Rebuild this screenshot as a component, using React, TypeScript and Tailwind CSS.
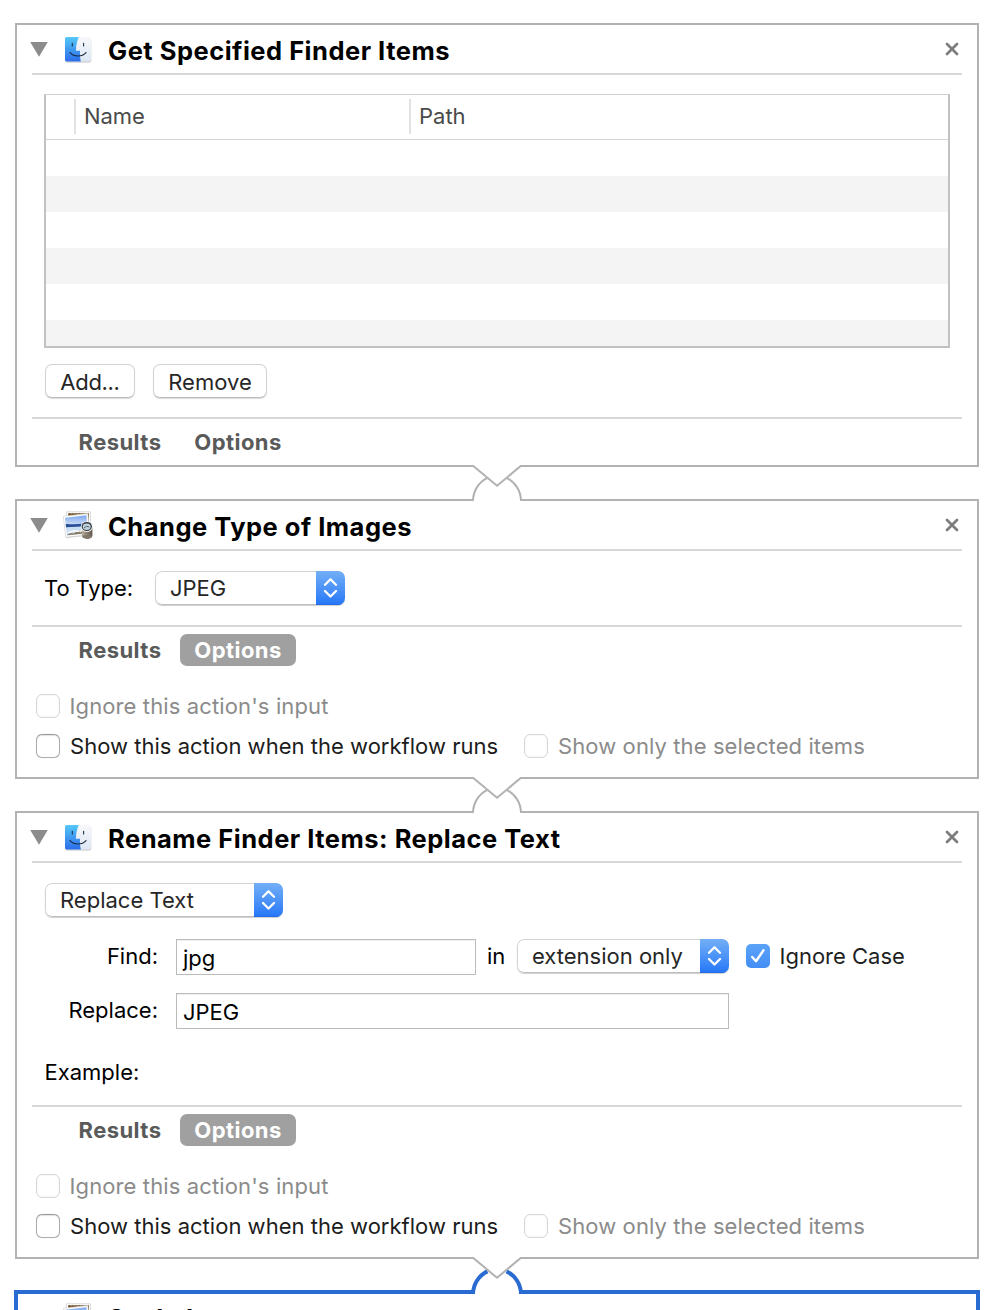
import type { ReactNode } from "react";

function FinderIcon() {
  return (
    <svg width="32" height="32" viewBox="0 0 32 32" className="block">
      <defs>
        <linearGradient id="finderBlue" x1="0" y1="0" x2="0" y2="1">
          <stop offset="0" stopColor="#55c8f8" />
          <stop offset="1" stopColor="#2c6cea" />
        </linearGradient>
        <linearGradient id="finderWhite" x1="0" y1="0" x2="0" y2="1">
          <stop offset="0" stopColor="#f8f8fa" />
          <stop offset="1" stopColor="#dce7f4" />
        </linearGradient>
      </defs>
      <rect x="2.8" y="4" width="26.6" height="25" rx="2" fill="#000" opacity="0.07" />
      <rect x="3" y="4.4" width="26.2" height="24" rx="1.8" fill="#000" opacity="0.12" />
      <rect x="3" y="3" width="26" height="24.6" rx="1.8" fill="url(#finderWhite)" />
      <path d="M4.8 3H16.8C15 7 14.1 11 13.9 16.8H18C17.9 20.5 18 24 18.8 27.6H4.8A1.8 1.8 0 0 1 3 25.8V4.8A1.8 1.8 0 0 1 4.8 3Z" fill="url(#finderBlue)" />
      <path d="M10.3 9.3v2.6M21.6 9.3v2.6" stroke="#173048" strokeWidth="1.1" strokeLinecap="round" />
      <path d="M8 18.6c4.2 4.5 12 4.5 16 0" fill="none" stroke="#14273c" strokeWidth="1.2" strokeLinecap="round" />
    </svg>
  );
}

function PreviewIcon() {
  return (
    <svg width="32" height="32" viewBox="0 0 32 32" className="block">
      <defs>
        <linearGradient id="sky" x1="0" y1="0" x2="0" y2="1">
          <stop offset="0" stopColor="#7fa9ee" />
          <stop offset="1" stopColor="#d5e4fa" />
        </linearGradient>
        <linearGradient id="loupe" x1="0" y1="0" x2="1" y2="0">
          <stop offset="0" stopColor="#b9b0a2" />
          <stop offset="0.5" stopColor="#8b8070" />
          <stop offset="1" stopColor="#5e574c" />
        </linearGradient>
      </defs>
      <path d="M4.4 1.8h24v22h-24z" fill="#fff" stroke="#c9c9c9" strokeWidth="0.7" />
      <path d="M6 3.2h21v18H6z" fill="#86683f" />
      <path d="M7 4.2h19M8 5.5h19" stroke="#4c3923" strokeWidth="0.9" strokeDasharray="1.4 1.8" />
      <path d="M1.6 7.2L26 4.4l2.2 20.8L4 28.2z" fill="#000" opacity="0.18" />
      <path d="M1.3 6.3L25.8 3.6l2.2 20.8L3.8 27.3z" fill="#fff" stroke="#cfcfcf" strokeWidth="0.6" />
      <path d="M3 7.8L24.4 5.3l1 9L3.9 16z" fill="url(#sky)" />
      <path d="M3.7 14.1c5 .4 12-.1 21.6-.9l.4 4-21.5 1.1z" fill="#294f96" />
      <path d="M4.1 17.3c7-.1 14-.7 21.5-1.2l.8 7-21.3 2.5z" fill="#c9def3" />
      <path d="M5 25.3c2-2.1 4.2-2.3 6.4-1.7 3-2.1 6.5-2.6 10-1.4l1 1.2z" fill="#85775d" />
      <path d="M6 22.7l6-2.1 5 .9" fill="none" stroke="#fff" strokeWidth="1.3" />
      <path d="M19.8 19.5v6c0 4.6 10.6 4.6 10.6 0v-8z" fill="url(#loupe)" />
      <ellipse cx="25" cy="26.4" rx="4.6" ry="1.5" fill="#81786a" />
      <ellipse cx="24.8" cy="16.6" rx="6" ry="5.4" fill="#eeeeed" />
      <ellipse cx="24.8" cy="16.5" rx="5.1" ry="4.5" fill="#31383e" />
      <ellipse cx="24.7" cy="16.8" rx="3.9" ry="3.3" fill="#c3d3de" />
      <path d="M22 18l2.6-1.8 2.6.8" fill="none" stroke="#53646e" strokeWidth="1" />
      <path d="M20.2 19.5l-2.4 2.4" stroke="#eee" strokeWidth="1.4" />
    </svg>
  );
}

function Header({ title, icon }: { title: string; icon: ReactNode }) {
  return (
    <>
      <div className="flex h-12 items-center pl-[13px] pr-[18px]">
        <svg width="18" height="15" viewBox="0 0 18 15" className="mt-px block shrink-0">
          <path d="M0.2 0H17.8L9 14.8Z" fill="#8c8c8c" />
        </svg>
        <div className="mt-[2px] ml-[14px]">{icon}</div>
        <h2 className="ml-[14px] mt-[3px] flex-1 whitespace-nowrap text-[25.5px] leading-8 font-bold tracking-[0.5px] text-black">{title}</h2>
        <svg width="14" height="14" viewBox="0 0 14 14" className="-mt-px block">
          <path d="M2 2L12 12M12 2L2 12" stroke="#7d7d7d" strokeWidth="2.7" strokeLinecap="round" />
        </svg>
      </div>
      <Divider />
    </>
  );
}

function Divider() {
  return <div className="mx-[15px] h-[2px] bg-[#d8d8d8]" />;
}

function Tabs({ active = false }: { active?: boolean }) {
  return (
    <div className="mt-[7px] flex h-8 gap-[2px] pl-[45px] text-[22px] leading-8 font-bold tracking-[0.45px] text-[#5a5a5a]">
      <div className="w-[116px] text-center">Results</div>
      <div className={active ? "w-[116px] rounded-[7px] bg-[#a0a0a0] text-center text-white" : "w-[116px] text-center"}>Options</div>
    </div>
  );
}

function Box({ disabled = false }: { disabled?: boolean }) {
  return (
    <span
      className={
        disabled
          ? "block size-6 shrink-0 rounded-[6px] border border-[#d8d8d8] bg-white shadow-[inset_0_0_2px_#e8e8e8]"
          : "block size-6 shrink-0 rounded-[6px] border border-[#adadad] border-t-[#999] bg-white shadow-[inset_0_1px_1px_#e4e4e4,0_0_1px_#ccc]"
      }
    />
  );
}

function OptionChecks() {
  return (
    <div className="mt-7 mb-[19px] flex flex-col gap-4 pl-[19px]">
      <div className="flex h-6 items-center whitespace-nowrap text-[#8b8b8b]">
        <Box disabled />
        <span className="ml-[9.5px] tracking-[0.12px]">Ignore this action's input</span>
      </div>
      <div className="flex h-6 items-center whitespace-nowrap">
        <Box />
        <span className="ml-[10px] w-[454px] tracking-[0.02px] text-[#1c1c1c]">Show this action when the workflow runs</span>
        <Box disabled />
        <span className="ml-[10px] tracking-[0.1px] text-[#8b8b8b]">Show only the selected items</span>
      </div>
    </div>
  );
}

function Popup({ label, className }: { label: string; className: string }) {
  return (
    <div className={"flex h-[34px] overflow-hidden rounded-[7px] shadow-[0_1px_1px_#d0d0d0] " + className}>
      <div className="flex flex-1 items-center whitespace-nowrap rounded-l-[7px] border border-r-0 border-[#d2d2d2] border-b-[#bdbdbd] pl-[14px] text-[#262626]">{label}</div>
      <div className="flex w-[29px] items-center justify-center bg-linear-to-b from-[#73aff6] to-[#2476f8] shadow-[inset_0_-1px_0_#246be9]">
        <svg width="15" height="22" viewBox="0 0 15 22">
          <path d="M2 7.7L7.5 2.2L13 7.7M2 14L7.5 19.5L13 14" fill="none" stroke="#fff" strokeWidth="2.3" strokeLinecap="round" strokeLinejoin="round" />
        </svg>
      </div>
    </div>
  );
}

function PushButton({ label, className }: { label: string; className: string }) {
  return (
    <button className={"h-[34px] rounded-[7px] border border-[#d2d2d2] border-b-[#bcbcbc] bg-white pt-px text-[#262626] shadow-[0_1px_1px_#ddd] " + className}>
      {label}
    </button>
  );
}

function Connector({ selected = false }: { selected?: boolean }) {
  return (
    <div className={selected ? "relative h-[31px]" : "relative h-8"}>
      <svg width="60" height="42" viewBox="0 0 60 42" className="absolute -top-[2px] left-[467px] z-10 block">
        {selected ? (
          <>
            <path d="M5 37V35A25 25 0 0 1 55 35V37Z" fill="#fff" />
            <path d="M6 37A24 25 0 0 1 20.5 14.4M39.5 14.4A24 25 0 0 1 54 37" fill="none" stroke="#2a6bd2" strokeWidth="4" />
          </>
        ) : (
          <>
            <path d="M6 36.1A24 25 0 0 1 54 36.1Z" fill="#fff" />
            <path d="M6 36A24 25.5 0 0 1 20 13.1M40 13.1A24 25.5 0 0 1 54 36" fill="none" stroke="#b2b2b2" strokeWidth="2" />
          </>
        )}
        <path d="M6 0H54V1L30 20.8L6 1Z" fill="#fff" />
        <path d="M4 1H6.3L30 20.8L53.7 1H56" fill="none" stroke="#b2b2b2" strokeWidth="2" />
      </svg>
    </div>
  );
}

const card = "ml-[15px] w-[964px] border-2 border-[#b2b2b2] bg-white";
const rows = ["h-9 bg-white", "h-9 bg-[#f4f4f4]", "h-9 bg-white", "h-9 bg-[#f4f4f4]", "h-9 bg-white", "h-[26px] bg-[#f4f4f4]"];

export default function App() {
  return (
    <main className="h-[1310px] w-[994px] overflow-hidden bg-white pt-[23px] font-['Inter','Liberation_Sans',sans-serif] text-[22px] leading-7 text-black">
      <section className={card}>
        <Header title="Get Specified Finder Items" icon={<FinderIcon />} />
        <div className="ml-[27px] mt-[19px] h-[254px] w-[906px] border-2 border-t border-[#c2c2c2] border-t-[#d0d0d0]">
          <div className="flex h-[45px] border-b border-[#d3d3d3] text-[#4a4a4a]">
            <div className="mt-1 h-[35px] w-[30px] border-r-2 border-[#e2e2e2]" />
            <div className="mt-1 h-[35px] w-[335px] border-r-2 border-[#e2e2e2] pl-2 leading-[34px] tracking-[-0.1px]">Name</div>
            <div className="mt-1 pl-2 leading-[34px]">Path</div>
          </div>
          {rows.map((r, i) => (
            <div key={i} className={r} />
          ))}
        </div>
        <div className="mt-4 mb-[19px] flex gap-[18px] pl-7">
          <PushButton label="Add..." className="w-[90px] tracking-[-0.3px]" />
          <PushButton label="Remove" className="w-[114px]" />
        </div>
        <Divider />
        <Tabs />
        <div className="h-[7px]" />
      </section>
      <Connector />
      <section className={card}>
        <Header title="Change Type of Images" icon={<PreviewIcon />} />
        <div className="my-5 flex h-[34px] items-center pl-[27px]">
          <span className="w-[111px] tracking-[-0.1px]">To Type:</span>
          <Popup label="JPEG" className="w-[190px]" />
        </div>
        <Divider />
        <Tabs active />
        <OptionChecks />
      </section>
      <Connector />
      <section className={card}>
        <Header title="Rename Finder Items: Replace Text" icon={<FinderIcon />} />
        <div className="mt-5 pl-7">
          <Popup label="Replace Text" className="w-[238px]" />
        </div>
        <div className="mt-[22px] flex h-9">
          <span className="w-[141px] text-right leading-[34px]">Find:</span>
          <div className="ml-[18px] h-9 w-[300px] border border-[#bcbcbc] pl-[6px] leading-[36px] shadow-[inset_0_1px_0_#eee]">jpg</div>
          <span className="ml-[11px] w-[30px] leading-[34px]">in</span>
          <Popup label="extension only" className="w-[212px]" />
          <span className="ml-[17px] mt-[5px] flex size-6 items-center justify-center rounded-[5px] bg-linear-to-b from-[#5ba3f8] to-[#438df5]">
            <svg width="18" height="18" viewBox="0 0 18 18">
              <path d="M3.2 10L7 14.2L14.5 3.3" fill="none" stroke="#fff" strokeWidth="2.4" strokeLinecap="round" strokeLinejoin="round" />
            </svg>
          </span>
          <span className="ml-[9.5px] leading-[34px] text-[#1f1f1f]">Ignore Case</span>
        </div>
        <div className="mt-[18px] flex h-9">
          <span className="w-[141px] text-right leading-[34px]">Replace:</span>
          <div className="ml-[18px] h-9 w-[553px] border border-[#bcbcbc] pl-[6px] leading-[36px] shadow-[inset_0_1px_0_#eee]">JPEG</div>
        </div>
        <div className="mt-[29px] mb-[19px] pl-[27.5px]">Example:</div>
        <Divider />
        <Tabs active />
        <OptionChecks />
      </section>
      <Connector selected />
      <section className="ml-[14px] w-[966px] border-4 border-[#2a6bd2] bg-white">
        <div className="-mt-px -ml-px">
          <Header title="Scale Images" icon={<PreviewIcon />} />
        </div>
      </section>
    </main>
  );
}
